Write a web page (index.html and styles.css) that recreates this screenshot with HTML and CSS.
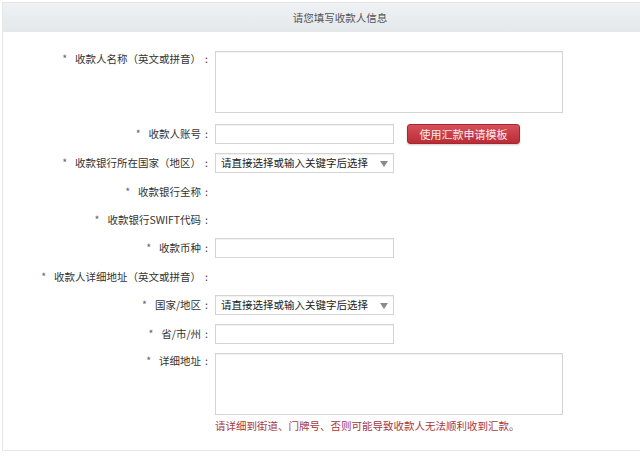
FILE: index.html
```html
<!DOCTYPE html>
<html lang="zh-CN">
<head>
  <meta charset="UTF-8" />
  <title>请您填写收款人信息</title>
  <link rel="stylesheet" href="styles.css">
</head>
<body>
  <div class="panel">
    <div class="panel-title">请您填写收款人信息</div>

    <div class="form">
      <div class="row row-tall">
        <label class="label"><span class="star">*</span>收款人名称（英文或拼音）<span class="colon">:</span></label>
        <textarea class="field area"></textarea>
      </div>

      <div class="row row-first-gap">
        <label class="label"><span class="star">*</span>收款人账号<span class="colon">:</span></label>
        <div class="inline">
          <input type="text" class="field text" />
          <button class="btn-red">使用汇款申请模板</button>
        </div>
      </div>

      <div class="row">
        <label class="label"><span class="star">*</span>收款银行所在国家（地区）<span class="colon">:</span></label>
        <div class="field select">请直接选择或输入关键字后选择</div>
      </div>

      <div class="row row-plain">
        <label class="label"><span class="star">*</span>收款银行全称<span class="colon">:</span></label>
      </div>

      <div class="row row-plain">
        <label class="label"><span class="star">*</span>收款银行SWIFT代码<span class="colon">:</span></label>
      </div>

      <div class="row">
        <label class="label"><span class="star">*</span>收款币种<span class="colon">:</span></label>
        <input type="text" class="field text" />
      </div>

      <div class="row row-plain">
        <label class="label"><span class="star">*</span>收款人详细地址（英文或拼音）<span class="colon">:</span></label>
      </div>

      <div class="row">
        <label class="label"><span class="star">*</span>国家/地区<span class="colon">:</span></label>
        <div class="field select">请直接选择或输入关键字后选择</div>
      </div>

      <div class="row">
        <label class="label"><span class="star">*</span>省/市/州<span class="colon">:</span></label>
        <input type="text" class="field text" />
      </div>

      <div class="row row-tall">
        <label class="label"><span class="star">*</span>详细地址<span class="colon">:</span></label>
        <div>
          <textarea class="field area"></textarea>
          <div class="hint">请详细到街道、门牌号、否则可能导致收款人无法顺利收到汇款。</div>
        </div>
      </div>
    </div>
  </div>
</body>
</html>
```

FILE: styles.css
```css
* {
  box-sizing: border-box;
}

body {
  margin: 0;
  background: #fff;
  font-family: "Noto Sans CJK SC", "Noto Sans", sans-serif;
  font-size: 10.5px;
  color: #333;
  overflow: hidden;
}

.panel {
  margin: 2px 0 0 2px;
  width: 660px;
  height: 449px;
  border: 1px solid #e4e6e8;
}

.panel-title {
  height: 29px;
  line-height: 29px;
  padding-left: 16px;
  text-align: center;
  color: #555;
  background: linear-gradient(to bottom, #eff2f4, #e3e8eb);
}

.form {
  padding-top: 19px;
  display: flex;
  flex-direction: column;
  gap: 9px;
}

.row {
  display: grid;
  grid-template-columns: 205px 1fr;
  column-gap: 7px;
  align-items: start;
  min-height: 20px;
}

.row-plain {
  min-height: 19px;
}

.row-plain .label {
  line-height: 19px;
}

.row-first-gap {
  margin-top: 2px;
}

.label {
  text-align: right;
  line-height: 20px;
  white-space: nowrap;
}

.row-tall .label {
  line-height: 16px;
}

.star {
  color: #666;
  margin-right: 8px;
}

.colon {
  margin-left: 4px;
}

.field {
  display: block;
  margin: 0;
  border: 1px solid #d4d4d4;
  box-shadow: inset 0 1px 1px rgba(0, 0, 0, 0.06);
  background: #fff;
  font: inherit;
}

.text {
  width: 179px;
  height: 20px;
  padding: 0 4px;
}

.area {
  width: 348px;
  height: 62px;
  resize: none;
}

.inline {
  display: flex;
  align-items: center;
  gap: 13px;
}

.btn-red {
  width: 113px;
  height: 20px;
  padding: 0;
  border: 1px solid #a8262f;
  border-radius: 3px;
  background: linear-gradient(to bottom, #d6505a, #b92d36);
  box-shadow: 0 1px 2px rgba(0, 0, 0, 0.2);
  color: #fbe9ea;
  font: inherit;
  font-size: 11px;
}

.select {
  position: relative;
  width: 179px;
  height: 20px;
  line-height: 18px;
  padding-left: 5px;
  color: #222;
}

.select::after {
  content: "";
  position: absolute;
  right: 5px;
  top: 7px;
  border-left: 4.5px solid transparent;
  border-right: 4.5px solid transparent;
  border-top: 6px solid #8a8a8a;
}

.hint {
  margin-top: 4px;
  color: #a8373d;
  line-height: 14px;
}
```
